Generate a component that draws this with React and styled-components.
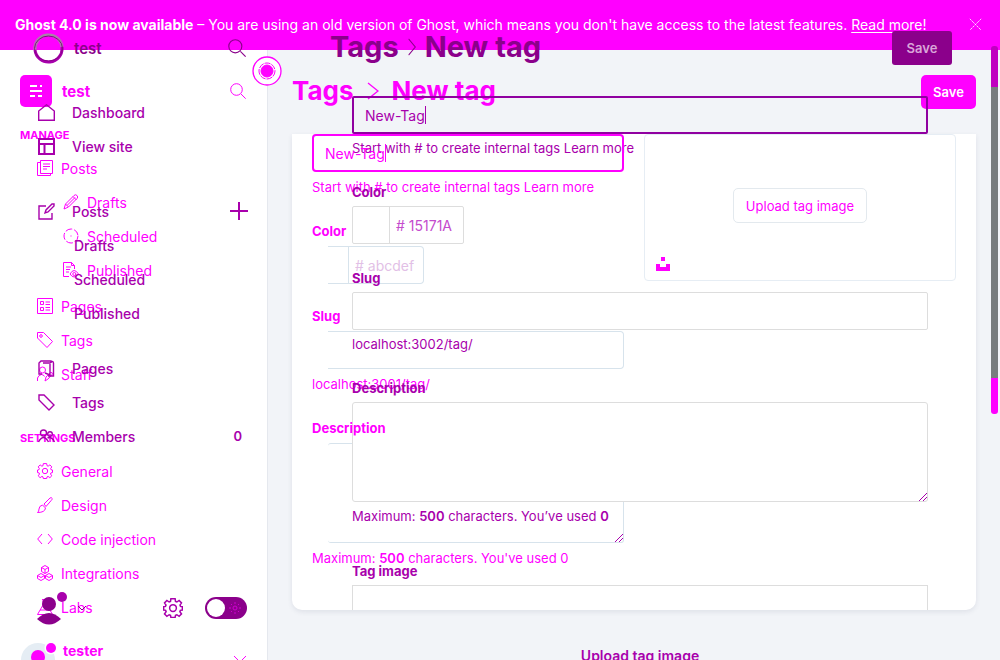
import React from "react";
import styled, { createGlobalStyle } from "styled-components";

const PINK = "#ff00ff";
const PLUM = "#8b008b";
const VIOLET = "#a800ac";

const Global = createGlobalStyle`
  * { box-sizing: border-box; }
  body { margin: 0; background: #f2f4f8; font-family: Inter, "Liberation Sans", sans-serif; font-size: 14px; }
  h1, p { margin: 0; }
  a { color: inherit; text-decoration: none; }
  button, input, textarea { font: inherit; color: inherit; }
  button { border: 0; background: none; padding: 0; }
  svg { display: block; flex: none; }
`;

const Stack = styled.div`
  display: grid;
  grid-template: minmax(0, 1fr) / minmax(0, 1fr);
  height: 100vh;
  overflow: hidden;
`;

const Layer = styled.div`
  grid-area: 1 / 1;
  display: grid;
  grid-template-columns: ${(p) => p.$columns};
  grid-template-rows: ${(p) => p.$rows || "1fr"};
  color: ${(p) => p.$color};
  min-height: 0;
`;

const Banner = styled.header`
  grid-column: 1 / -1;
  display: flex;
  align-items: center;
  justify-content: space-between;
  background: ${PINK};
  color: #fff;
  padding: 0 18px 2px 15px;
  white-space: nowrap;
  a { text-decoration: underline; text-underline-offset: 2px; }
`;

const Sidebar = styled.aside`
  background: ${(p) => p.$fill || "transparent"};
  border-right: ${(p) => (p.$fill ? "1px solid #e5e8ee" : "0")};
  padding-top: ${(p) => p.$top}px;
  min-height: 0;
`;

const SiteRow = styled.div`
  display: flex;
  align-items: center;
  height: 34px;
  gap: 10px;
  padding: ${(p) => p.$pad};
  margin-bottom: ${(p) => p.$after}px;
  color: ${(p) => p.$ink || "inherit"};
  strong { flex: 1; font-size: ${(p) => p.$size}px; font-weight: ${(p) => p.$weight}; }
`;

const Nav = styled.nav`
  margin-bottom: ${(p) => p.$after || 0}px;
`;

const Heading = styled.div`
  height: 33px;
  line-height: 34px;
  padding-left: 20px;
  font-size: 11px;
  font-weight: 700;
`;

const NavLink = styled.a`
  display: flex;
  align-items: center;
  height: 34px;
  gap: ${(p) => p.$gap || 8}px;
  padding-left: ${(p) => p.$indent}px;
  padding-right: ${(p) => p.$right || 28}px;
  font-weight: ${(p) => p.$weight || 400};
  span { flex: 1; }
  b { font-size: 13px; font-weight: 600; }
`;

const Footer = styled.div`
  display: flex;
  align-items: center;
  height: 34px;
  padding-left: ${(p) => p.$left}px;
  gap: ${(p) => p.$gap}px;
`;

const Switch = styled.label`
  position: relative;
  width: 42px;
  height: 22px;
  border-radius: 11px;
  background: ${PLUM};
  input { display: block; appearance: none; margin: 2px; width: 18px; height: 18px; border-radius: 9px; background: #fff; }
  svg { position: absolute; right: 5px; top: 4px; }
`;

const Main = styled.main`
  padding: ${(p) => p.$pad};
  min-width: 0;
`;

const TitleRow = styled.div`
  display: flex;
  align-items: center;
  height: 35px;
  margin-right: ${(p) => p.$overhang || 0}px;
  color: ${(p) => p.$ink || "inherit"};
`;

const Title = styled.h1`
  display: flex;
  align-items: center;
  gap: ${(p) => p.$gap}px;
  flex: 1;
  padding-bottom: 2px;
  font-size: ${(p) => p.$size}px;
  line-height: 34px;
  font-weight: 700;
  white-space: nowrap;
`;

const Save = styled.button`
  width: ${(p) => p.$width}px;
  height: 34px;
  border-radius: ${(p) => p.$radius}px;
  background: ${(p) => p.$fill};
  color: ${(p) => p.$ink};
  font-size: 13px;
  font-weight: 600;
`;

const Card = styled.section`
  display: grid;
  grid-template-columns: minmax(0, 1fr) minmax(0, 1fr);
  gap: 20px;
  height: 476px;
  margin-top: 25px;
  padding: 0 20px;
  background: #fff;
  border-radius: 0 0 10px 10px;
  box-shadow: 0 2px 5px rgba(60, 70, 100, 0.1);
`;

const Form = styled.form`
  padding: ${(p) => p.$pad || 0};
`;

const Field = styled.div`
  margin-bottom: ${(p) => p.$after}px;
`;

const Label = styled.label`
  position: relative;
  z-index: 1;
  display: block;
  height: ${(p) => p.$line}px;
  line-height: ${(p) => p.$line}px;
  font-size: 13px;
  font-weight: 700;
`;

const Help = styled.p`
  height: ${(p) => p.$line}px;
  line-height: ${(p) => p.$line}px;
  font-size: 13px;
  white-space: nowrap;
  b { font-weight: 600; }
`;

const edge = {
  old: "#d7e3ec",
  now: "#dddddd",
};

const TextInput = styled.input`
  display: block;
  width: 100%;
  height: 38px;
  padding: 0 11px;
  outline: 0;
  border: ${(p) => (p.$active ? `2px solid ${p.$active}` : `1px solid ${edge[p.$tone]}`)};
  border-radius: ${(p) => (p.$tone === "old" ? 4 : 2)}px;
  background: transparent;
`;

const Trailing = styled.div`
  padding-left: 16px;
  > input, > textarea, > div { border-left: 0; border-radius: 0 4px 4px 0; }
`;

const Active = styled.div`
  position: relative;
  &::after {
    content: "";
    position: absolute;
    left: ${(p) => p.$caret}px;
    top: 10px;
    width: 1px;
    height: 18px;
    background: currentColor;
  }
`;

const Area = styled.div`
  position: relative;
  textarea {
    display: block;
    width: 100%;
    height: 100px;
    resize: none;
    outline: 0;
    border: 1px solid ${(p) => edge[p.$tone]};
    border-left-width: ${(p) => (p.$tone === "old" ? 0 : 1)}px;
    border-radius: 3px;
    background: ${(p) => (p.$tone === "old" ? "transparent" : "#fff")};
  }
  svg { position: absolute; right: 1px; bottom: 1px; }
`;

const ColorBox = styled.div`
  display: flex;
  width: ${(p) => p.$width}px;
  height: 38px;
  border: 1px solid ${(p) => edge[p.$tone]};
  border-radius: 2px;
  input {
    width: 100%;
    margin-left: ${(p) => p.$swatch}px;
    padding: 0 6px;
    border: 0;
    border-left: 1px solid ${(p) => edge[p.$tone]};
    outline: 0;
    background: transparent;
    color: ${(p) => p.$ink};
    min-width: 0;
  }
`;

const Drop = styled.div`
  position: relative;
  display: flex;
  align-items: center;
  justify-content: center;
  height: 147px;
  padding-bottom: 4px;
  border: 1px solid #e6edf4;
  border-radius: 4px;
  button {
    width: 134px;
    height: 35px;
    border: 1px solid #e3e9ee;
    border-radius: 5px;
    font-size: 13px;
    white-space: nowrap;
  }
  svg { position: absolute; left: 11px; bottom: 9px; }
`;

const ImageBox = styled.div`
  height: 25px;
  border: 1px solid ${edge.now};
  border-bottom: 0;
`;

const UploadNote = styled.p`
  padding-top: 37px;
  text-align: center;
  font-weight: 600;
  line-height: 18px;
`;

const Ring = styled.div`
  position: absolute;
  left: 252px;
  top: 56px;
`;

const Scroll = styled.div`
  position: absolute;
  right: 2px;
  top: 46px;
  width: 7px;
  height: 368px;
  border-radius: 3px;
  background: linear-gradient(#c000c0 0 41px, #787c7e 41px 332px, ${PINK} 332px);
`;

const Icon = ({ size = 16, box = 16, w = 1, children }) => (
  <svg width={size} height={size} viewBox={`0 0 ${box} ${box}`} fill="none" stroke="currentColor" strokeWidth={w} aria-hidden="true">
    {children}
  </svg>
);

const icons = {
  posts: <><path d="M3.500.5h12v13h-12zM3 2.500H.5v13h13V14M6 4h7M6 6.500h7M6 9h4" /></>,
  drafts: <path d="m1 15 1.500-5L11 1.500q1.500-1.500 3 0t0 3L5.500 13zM2.500 10l3 3M4 11.500l8-8M10 2.500l3.500 3.500" />,
  scheduled: <><circle cx="8" cy="8" r="7" strokeDasharray="7 2" /><path d="M8 7.500v1" /></>,
  published: <><path d="M6 14.500H.5V.5h8l3 3V7M8.500.5v3h3M3 5h5M3 7.500h4M3 10h3" /><path d="M7 12q4-7 8.500 0-4.500 6-8.500 0" /><circle cx="11.300" cy="12" r="1.500" /></>,
  pages: <path d="M.5.5h15v15H.5zM3.500 3.500h3v3h-3zM3.500 9.500h3v3h-3zM8.500 4H13M8.500 6.500H13M8.500 9.500H13M8.500 12H13" />,
  tags: <><path d="M.5.5h6l9 9-5.500 6L.5 6z" /><circle cx="4" cy="4" r="1.300" /></>,
  staff: <><circle cx="5.500" cy="4" r="3" /><path d="M.5 15v-3q1-3 4-3.500 2 0 3 2M8 15l1-4 4.500-4.500q2-.5 2 1.500L11 13z" /></>,
  general: <><circle cx="8" cy="8" r="2.700" /><path d="M6.300.6h3.400l.3 2.100 1.100.5 1.800-1.300 1.900 2-1.200 1.800.4 1 1.500.3v2.600l-1.600.3-.4 1.100 1.300 1.800-1.900 1.900-1.800-1.300-1.100.5-.3 1.600H6.300L6 13.900l-1.100-.5-1.800 1.300-1.900-1.900 1.300-1.800-.4-1.100-1.600-.3V7l1.500-.3.4-1-1.200-1.800 1.900-2 1.800 1.300L6 2.700z" /></>,
  design: <path d="m7 7 6-6q1.500-1 2.200.5 0 1-1 2L9 9.500zM5.500 8 8.500 11Q8 15.500.5 15.500q1.500-1 1.500-3.500 0-3 3.500-4z" />,
  code: <path d="M5 3 .7 8 5 13M11 3l4.300 5L11 13" />,
  integrations: <path d="m8 .5 3.500 2v4L8 8.500l-3.500-2v-4zM4.500 2.500 8 4.500l3.500-2M8 4.500v4M4 8.500l3.500 2v3L4 15.500l-3.500-2v-3zM.5 10.500l3.500 2 3.500-2M12 8.500l3.500 2v3l-3.500 2-3.500-2v-3zM8.500 10.500l3.500 2 3.500-2" />,
  labs: <path d="M5 .5h6M6 1v5L.5 15.500h15L10 6V1M3 11h10" />,
};

const nowIcons = {
  home: <path d="M.7 7v9.300h15.600V7L8.500.8z" />,
  view: <path d="M1 1h15v15H1zM1 6h15M6.500 6v10" strokeWidth="2" />,
  edit: <path d="M8 3H1v13h13v-6M7 10l1-3 6-6h2v2l-6 6z" />,
  pages: <path d="M4 14H1V3l2-2h10v2M5 3h7q3-3 3.500 0v13H10M12 4v11l-5-2" />,
  tag: <path d="M1 1h5l10 10-5 5L1 6z" />,
  members: <><circle cx="5.500" cy="5" r="3" /><circle cx="12" cy="6" r="2.300" /><path d="M.5 14q5-9 10 0M9.500 10q4-2 7 4" /></>,
};

const Search = ({ size }) => (
  <Icon size={size}><circle cx="6.500" cy="6.500" r="5.800" /><path d="m11 11 4.700 4.700" /></Icon>
);

const Chevron = ({ width }) => (
  <svg width={width} height="18" viewBox="0 0 12 18" preserveAspectRatio="none" fill="none" stroke="currentColor" strokeWidth="1.300" aria-hidden="true">
    <path d="m1 1 10 8-10 8" />
  </svg>
);

const Grip = ({ color }) => (
  <svg width="8" height="8" viewBox="0 0 8 8" stroke={color} aria-hidden="true"><path d="m0 8 8-8M4 8l4-4" /></svg>
);

const Old = ({ icon, children, sub }) => (
  <NavLink href="#" $indent={sub ? 63 : 37}>
    <Icon>{icons[icon]}</Icon><span>{children}</span>
  </NavLink>
);

const Now = ({ icon, children, extra, right }) => (
  <NavLink href="#" $indent={icon ? 38 : 74} $gap={17} $weight={500} $right={right}>
    {icon && <Icon size={17} box={17} w={1.4}>{nowIcons[icon]}</Icon>}
    <span>{children}</span>{extra}
  </NavLink>
);

function OldAdmin() {
  return (
    <Layer $columns="268px minmax(0, 1fr)" $rows="50px minmax(0, 1fr)" $color={PINK}>
      <Banner>
        <p><b>Ghost 4.0 is now available</b> – You are using an old version of Ghost, which means you don't have access to the latest features. <a href="#">Read more!</a></p>
        <button type="button" aria-label="Close">
          <Icon size={13}><path d="m1 1 14 14M15 1 1 15" strokeDasharray="3 1" /></Icon>
        </button>
      </Banner>
      <Sidebar $fill="#fff" $top={24}>
        <SiteRow $pad="0 21px 0 20px" $after={10} $size={15} $weight={700}>
          <svg width="32" height="32" viewBox="0 0 32 32" aria-hidden="true">
            <rect width="32" height="32" rx="5" fill={PINK} />
            <path d="M10 11h7m3 0h2M10 16h12M10 21h5m3 0h4" stroke="#fff" strokeWidth="2" />
          </svg>
          <strong>test</strong>
          <Search size={16} />
        </SiteRow>
        <Heading>MANAGE</Heading>
        <Nav $after={2}>
          <Old icon="posts">Posts</Old>
          <Old sub icon="drafts">Drafts</Old>
          <Old sub icon="scheduled">Scheduled</Old>
          <Old sub icon="published">Published</Old>
        </Nav>
        <Nav $after={30}>
          <Old icon="pages">Pages</Old>
          <Old icon="tags">Tags</Old>
          <Old icon="staff">Staff</Old>
        </Nav>
        <Heading>SETTINGS</Heading>
        <Nav $after={9}>
          <Old icon="general">General</Old>
          <Old icon="design">Design</Old>
          <Old icon="code">Code injection</Old>
          <Old icon="integrations">Integrations</Old>
          <Old icon="labs">Labs</Old>
        </Nav>
        <SiteRow $pad="0 20px" $after={0} $size={14} $weight={700}>
          <svg width="33" height="36" viewBox="0 0 33 36" overflow="visible" aria-hidden="true">
            <circle cx="18" cy="28" r="17" fill="#e5edf4" />
            <circle cx="18" cy="25" r="7" fill={PINK} />
            <circle cx="31" cy="16" r="6.500" fill="#fff" />
            <circle cx="31" cy="16" r="5" fill={PINK} />
          </svg>
          <strong>tester</strong>
          <svg width="14" height="8" viewBox="0 0 14 8" overflow="visible" fill="none" stroke={PINK} aria-hidden="true"><path d="m1 10 6 6 6-6" /></svg>
        </SiteRow>
      </Sidebar>
      <Main $pad="24px 24px 0">
        <TitleRow>
          <Title $size={26} $gap={13}><a href="#">Tags</a><Chevron width={12} /><span>New tag</span></Title>
          <Save type="button" $width={55} $radius={5} $fill={PINK} $ink="#fff">Save</Save>
        </TitleRow>
        <Card>
          <Form>
            <Field $after={14}>
              <Active $caret={73}><TextInput aria-label="Name" defaultValue="New-Tag" $tone="old" $active={PINK} /></Active>
              <Help $line={30}>Start with # to create internal tags <a href="#">Learn more</a></Help>
            </Field>
            <Field $after={17}>
              <Label htmlFor="old-color" $line={30}>Color</Label>
              <Trailing>
                <ColorBox $tone="old" $width={96} $swatch={20} $ink="#e2bfe6">
                  <input id="old-color" defaultValue="# abcdef" />
                </ColorBox>
              </Trailing>
            </Field>
            <Field $after={14}>
              <Label htmlFor="old-slug" $line={30}>Slug</Label>
              <Trailing><TextInput id="old-slug" $tone="old" /></Trailing>
              <Help $line={30}>localhost:3001/tag/</Help>
            </Field>
            <Field $after={0}>
              <Label htmlFor="old-description" $line={30}>Description</Label>
              <Trailing><Area $tone="old"><textarea id="old-description" /><Grip color={VIOLET} /></Area></Trailing>
              <Help $line={30}>Maximum: <b>500</b> characters. You've used 0</Help>
            </Field>
          </Form>
          <Drop>
            <button type="button">Upload tag image</button>
            <svg width="14" height="14" viewBox="0 0 14 14" fill={PINK} aria-hidden="true"><path d="M5 0h4v4H5zM0 7h4v3h6V7h4v7H0z" /></svg>
          </Drop>
        </Card>
      </Main>
    </Layer>
  );
}

function NewAdmin() {
  return (
    <Layer $columns="330px minmax(0, 1fr)" $color={VIOLET}>
      <Sidebar $top={31}>
        <SiteRow $pad="0 84px 0 33px" $after={30} $size={15} $weight={600} $ink={PLUM}>
          <svg width="31" height="31" viewBox="0 0 31 31" fill="none" aria-hidden="true">
            <path d="M2 17A13.500 13.500 0 0 1 29 14" stroke="#a785a7" strokeWidth="3" />
            <path d="M29 14A13.500 13.500 0 0 1 2 17" stroke={VIOLET} strokeWidth="3" />
            <ellipse cx="15.500" cy="15.500" rx="14" ry="12.500" stroke={PLUM} />
          </svg>
          <strong>test</strong>
          <Search size={18} />
        </SiteRow>
        <Nav $after={31}>
          <Now icon="home">Dashboard</Now>
          <Now icon="view">View site</Now>
        </Nav>
        <Nav $after={21}>
          <Now icon="edit" right={82} extra={<Icon size={18} box={18} w={2}><path d="M9 0v18M0 9h18" /></Icon>}>Posts</Now>
          <Now>Drafts</Now>
          <Now>Scheduled</Now>
          <Now>Published</Now>
        </Nav>
        <Nav $after={138}>
          <Now icon="pages">Pages</Now>
          <Now icon="tag">Tags</Now>
          <Now icon="members" right={88} extra={<b>0</b>}>Members</Now>
        </Nav>
        <Footer $left={36} $gap={11}>
          <svg width="31" height="34" viewBox="0 0 31 34" fill={PLUM} aria-hidden="true">
            <circle cx="13" cy="13" r="7" /><circle cx="26" cy="6" r="5" fill={VIOLET} />
            <path d="M1 28q12-12 24 0-12 11-24 0" />
          </svg>
          <Footer $left={0} $gap={77}>
            <svg width="8" height="6" viewBox="0 0 8 6" fill="none" stroke={PLUM} aria-hidden="true"><path d="m0 1 4 4 4-4" /></svg>
            <Footer $left={0} $gap={22}>
              <Icon size={20} w={1.2}>{icons.general}</Icon>
              <Switch>
                <input type="checkbox" aria-label="Night shift" />
                <svg width="14" height="14" viewBox="0 0 14 14" fill="none" stroke="#cf00cf" aria-hidden="true">
                  <circle cx="7" cy="7" r="2" /><path d="M7 1v2M7 11v2M1 7h2M11 7h2M3 3l1 1M10 10l1 1M3 11l1-1M10 4l1-1" />
                </svg>
              </Switch>
            </Footer>
          </Footer>
        </Footer>
      </Sidebar>
      <Main $pad="30px 72px 0 0">
        <TitleRow $ink={PLUM} $overhang={-24}>
          <Title $size={29} $gap={9}><a href="#">Tags</a><Chevron width={8} /><span>New tag</span></Title>
          <Save type="button" $width={60} $radius={3} $fill={PLUM} $ink="#d9a6d9">Save</Save>
        </TitleRow>
        <Form $pad="31px 0 0 22px">
          <Field $after={16}>
            <Active $caret={73}><TextInput aria-label="Tag name" defaultValue="New-Tag" $tone="now" $active="#9000a0" /></Active>
            <Help $line={28}>Start with # to create internal tags <a href="#">Learn more</a></Help>
          </Field>
          <Field $after={20}>
            <Label htmlFor="color" $line={28}>Color</Label>
            <ColorBox $tone="now" $width={112} $swatch={36} $ink="#c44bcd">
              <input id="color" defaultValue="# 15171A" />
            </ColorBox>
          </Field>
          <Field $after={16}>
            <Label htmlFor="slug" $line={28}>Slug</Label>
            <TextInput id="slug" $tone="now" />
            <Help $line={28}>localhost:3002/tag/</Help>
          </Field>
          <Field $after={27}>
            <Label htmlFor="description" $line={28}>Description</Label>
            <Area $tone="now"><textarea id="description" /><Grip color={VIOLET} /></Area>
            <Help $line={28}>Maximum: <b>500</b> characters. You’ve used <b>0</b></Help>
          </Field>
          <Label as="p" $line={28}>Tag image</Label>
          <ImageBox />
          <UploadNote>Upload tag image</UploadNote>
        </Form>
      </Main>
    </Layer>
  );
}

export default function App() {
  return (
    <>
      <Global />
      <Stack>
        <OldAdmin />
        <NewAdmin />
      </Stack>
      <Ring>
        <svg width="30" height="30" viewBox="0 0 30 30" fill="none" stroke={PINK} aria-hidden="true">
          <circle cx="15" cy="15" r="14" fill="#fff" strokeWidth="1.300" />
          <circle cx="15" cy="15" r="8" strokeDasharray="6 1" />
          <circle cx="15" cy="15" r="6" fill={PINK} />
        </svg>
      </Ring>
      <Scroll />
    </>
  );
}
